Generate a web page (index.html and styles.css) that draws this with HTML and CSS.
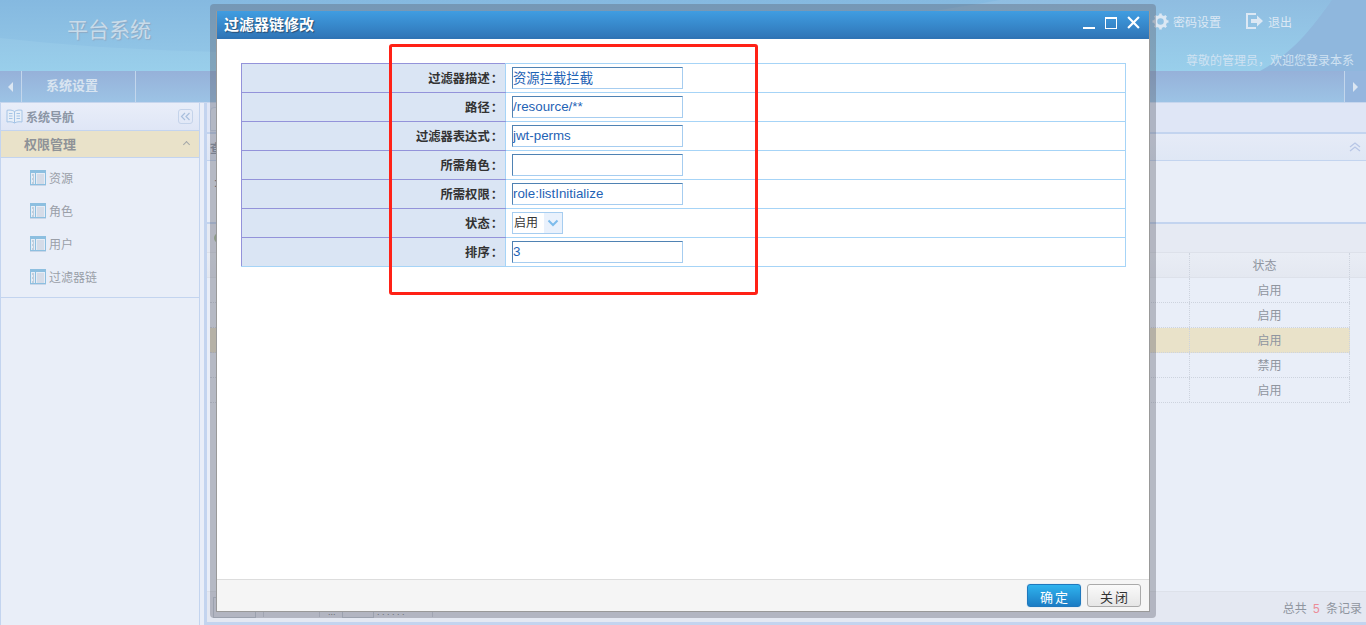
FILE: index.html
```html
<!DOCTYPE html>
<html lang="zh-CN">
<head>
<meta charset="utf-8">
<title>平台系统</title>
<link rel="stylesheet" href="styles.css">
</head>
<body>
<svg class="defs" width="0" height="0" aria-hidden="true">
  <symbol id="win" viewBox="0 0 16 16">
    <rect x="0.5" y="0.5" width="15" height="14" fill="#e6edf6" stroke="#8dbfe0"/>
    <rect x="1" y="1" width="14" height="2" fill="#8dbfe0"/>
    <rect x="5" y="1" width="1" height="14" fill="#8dbfe0"/>
    <rect x="7" y="4" width="7" height="10" fill="#d5dce8"/>
    <path d="M2 5h2M3 7h1M2 9h2M3 11h1M2 13h2" stroke="#9ab0c4" stroke-width="1"/>
    <rect x="0" y="15" width="16" height="1" fill="#c9d6e8"/>
  </symbol>
  <linearGradient id="skyfill" x1="0" y1="0" x2="0" y2="1">
    <stop offset="0" stop-color="#8fbde1"/>
    <stop offset="1" stop-color="#99cfeb"/>
  </linearGradient>
  <linearGradient id="wavefill" gradientUnits="userSpaceOnUse" x1="0" y1="0" x2="0" y2="62">
    <stop offset="0" stop-color="#85b9e0"/>
    <stop offset="1" stop-color="#93c7e7"/>
  </linearGradient>
</svg>
<div class="page">
  <header class="top">
    <svg class="top-bg" viewBox="0 0 1366 71" preserveAspectRatio="none" aria-hidden="true">
      <rect width="1366" height="71" fill="url(#skyfill)"/>
      <path d="M0 0H1000C760 44 300 72 0 38Z" fill="url(#wavefill)"/>
      <path d="M1332 0H1366V71H1260C1294 52 1312 28 1332 0Z" fill="#8fb7dd"/>
    </svg>
    <div class="brand">平台系统</div>
    <div class="top-right">
      <div class="tools">
        <span class="tool">
          <svg class="gear" viewBox="0 0 16 16" aria-hidden="true"><circle cx="8" cy="8" r="4.6" fill="none" stroke="#dce8f4" stroke-width="3"/><path d="M8 .5v3M8 12.500v3M.5 8h3M12.500 8h3M2.700 2.700l2 2M11.300 11.300l2 2M13.300 2.700l-2 2M4.700 11.300l-2 2" stroke="#dce8f4" stroke-width="2.400"/></svg>
          密码设置
        </span>
        <span class="tool">
          <svg class="exit" viewBox="0 0 18 16" aria-hidden="true"><path d="M10 1H1v14h9" fill="none" stroke="#dce8f4" stroke-width="2"/><path d="M5 6h6V2.500L17 8l-6 5.500V10H5Z" fill="#dce8f4"/></svg>
          退出
        </span>
      </div>
      <div class="welcome">尊敬的管理员，欢迎您登录本系</div>
    </div>
  </header>

  <nav class="menubar">
    <span class="arrow-cell"><i class="tri tri-left"></i></span>
    <span class="menu-item">系统设置</span>
    <span class="arrow-cell arrow-right"><i class="tri tri-right"></i></span>
  </nav>

  <div class="content">
    <aside class="side">
      <div class="side-head">
        <svg class="book" viewBox="0 0 17 15" aria-hidden="true"><path d="M8.500 2.500C6.500 1 3.500 .8 1 1.300V13C3.500 12.500 6.500 12.700 8.500 14C10.500 12.700 13.500 12.500 16 13V1.300C13.500 .8 10.500 1 8.500 2.500ZM8.500 2.500V14M3 4.500h3.500M3 7h3.500M3 9.500h3.500M10.500 4.500H14M10.500 7H14M10.500 9.500H14" fill="#e8eff8" stroke="#a5c4e6"/></svg>
        <span>系统导航</span>
        <span class="collapse"><svg viewBox="0 0 11 9" aria-hidden="true"><path d="M5 1L1.500 4.500 5 8M9.500 1L6 4.500 9.500 8" fill="none" stroke="#a9bfdd" stroke-width="1.200"/></svg></span>
      </div>
      <div class="acc-head"><span class="acc-title">权限管理</span><i class="caret"></i></div>
      <ul class="acc-list">
        <li><svg class="win" aria-hidden="true"><use href="#win"/></svg>资源</li>
        <li><svg class="win" aria-hidden="true"><use href="#win"/></svg>角色</li>
        <li><svg class="win" aria-hidden="true"><use href="#win"/></svg>用户</li>
        <li><svg class="win" aria-hidden="true"><use href="#win"/></svg>过滤器链</li>
      </ul>
    </aside>

    <main class="main">
      <div class="tabs"><span class="tab"></span></div>
      <div class="query-head">
        <span class="query-title">查询</span>
        <svg class="up2" viewBox="0 0 12 10" aria-hidden="true"><path d="M1 5l5-4 5 4M1 9l5-4 5 4" fill="none" stroke="#b8c6e6" stroke-width="1.300"/></svg>
      </div>
      <div class="query-body"><span class="colon">:</span></div>
      <div class="toolbar"><i class="green"></i></div>
      <div class="grid">
        <div class="grid-row grid-header"><span class="c1"></span><span class="c2">状态</span></div>
        <div class="grid-row"><span class="c1"></span><span class="c2">启用</span></div>
        <div class="grid-row"><span class="c1"></span><span class="c2">启用</span></div>
        <div class="grid-row selected"><span class="c1"></span><span class="c2">启用</span></div>
        <div class="grid-row"><span class="c1"></span><span class="c2">禁用</span></div>
        <div class="grid-row"><span class="c1"></span><span class="c2">启用</span></div>
      </div>
      <div class="pager">
        <span class="pbox"></span><span class="psep s1"></span><span class="psep s2"></span>
        <span class="pdots">...</span><span class="pbox small"></span><span class="pdots long">. . . . . .</span><span class="psep s3"></span>
        <span class="total">总共 <b>5</b> 条记录</span>
      </div>
    </main>
  </div>
</div>

<section class="dialog-frame">
  <div class="dialog">
    <div class="dialog-title">
      <span>过滤器链修改</span>
      <div class="win-btns">
        <i class="w-min"></i><i class="w-max"></i>
        <svg class="w-close" viewBox="0 0 12 12" aria-hidden="true"><path d="M1 1l10 10M11 1L1 11" stroke="#fff" stroke-width="2"/></svg>
      </div>
    </div>
    <div class="dialog-body">
      <table class="form">
        <tr><th>过滤器描述<span class="cl">：</span></th><td><input class="field" value="资源拦截拦截"></td></tr>
        <tr><th>路径<span class="cl">：</span></th><td><input class="field" value="/resource/**"></td></tr>
        <tr><th>过滤器表达式<span class="cl">：</span></th><td><input class="field" value="jwt-perms"></td></tr>
        <tr><th>所需角色<span class="cl">：</span></th><td><input class="field" value=""></td></tr>
        <tr><th>所需权限<span class="cl">：</span></th><td><input class="field" value="role:listInitialize"></td></tr>
        <tr><th>状态<span class="cl">：</span></th><td><div class="sel"><span class="sel-text">启用</span><span class="sel-arrow"><svg viewBox="0 0 12 8" aria-hidden="true"><path d="M1.500 1.500L6 6l4.500-4.500" fill="none" stroke="#7dbcec" stroke-width="2"/></svg></span></div></td></tr>
        <tr><th>排序<span class="cl">：</span></th><td><input class="field" value="3"></td></tr>
      </table>
    </div>
    <div class="dialog-foot">
      <button class="btn btn-ok">确定</button>
      <button class="btn btn-close">关闭</button>
    </div>
  </div>
</section>
<div class="annotation"></div>
</body>
</html>
```
FILE: styles.css
```css
* { box-sizing: border-box; }
html, body { margin: 0; padding: 0; height: 100%; overflow: hidden; }
body {
  font-family: "Liberation Sans", "Noto Sans CJK SC", sans-serif;
  font-size: 12px;
  background: #e9eef8;
  color: #8f959f;
}
.defs { position: absolute; }
.page { display: flex; flex-direction: column; width: 1366px; height: 625px; overflow: hidden; }

/* header */
.top { position: relative; height: 71px; display: flex; justify-content: space-between; flex: none; }
.top-bg { position: absolute; inset: 0; width: 100%; height: 100%; }
.brand {
  position: relative;
  margin: 13px 0 0 67px;
  font-size: 21px;
  line-height: 34px;
  color: #c9dbe9;
  text-shadow: 1px 1px 1px #8ea9c4;
}
.top-right { position: relative; width: 214px; display: flex; flex-direction: column; align-items: flex-end; }
.tools { display: flex; gap: 25px; margin: 11px 74px 0 0; height: 20px; align-items: center; color: #dce8f4; }
.tool { display: flex; align-items: center; gap: 4px; }
.gear { width: 17px; height: 17px; }
.exit { width: 18px; height: 16px; }
.welcome { margin: 20px 12px 0 0; height: 20px; line-height: 20px; white-space: nowrap; color: #cfe2f2; }

/* menu bar */
.menubar {
  height: 32px; flex: none; display: flex; align-items: stretch;
  background: linear-gradient(#96b1d9, #9cc3e5);
  border-bottom: 1px solid #c6d6ee;
}
.arrow-cell { width: 22px; display: flex; align-items: center; justify-content: center; border-right: 1px solid #c3d6ec; }
.arrow-right { margin-left: auto; border-right: 0; border-left: 1px solid #c3d6ec; background: #95b6de; }
.tri { width: 0; height: 0; border-style: solid; border-color: transparent; }
.tri-left { border-width: 5px 5px 5px 0; border-right-color: #dbe6f2; }
.tri-right { border-width: 5px 0 5px 5px; border-left-color: #dbe6f2; }
.menu-item { width: 114px; display: flex; align-items: center; padding: 0 0 5px 24px; font-weight: bold; font-size: 13px; color: #d8e4f0; border-right: 1px solid #c3d6ec; }

/* main row */
.content { flex: 1; display: flex; min-height: 0; }
.side { width: 200px; flex: none; background: #e9eef8; border: solid #c3d4ef; border-width: 0 1px 0 1px; }
.side-head { height: 27px; display: flex; align-items: center; padding: 0 6px 0 5px; gap: 3px; font-weight: bold; color: #8b95a5; background: linear-gradient(#e9eef9, #dfe6f6); }
.book { width: 17px; height: 15px; }
.collapse { margin-left: auto; width: 15px; height: 15px; display: flex; align-items: center; justify-content: center; border: 1px solid #c4d3ea; border-radius: 3px; }
.collapse svg { width: 11px; height: 9px; }
.acc-head { height: 28px; display: flex; align-items: center; padding: 0 10px 2px 23px; justify-content: space-between; background: #e9e2c9; border: solid #c3d4ef; border-width: 1px 0; font-size: 13px; font-weight: bold; color: #8e9297; }
.caret { width: 5px; height: 5px; border: solid #a3a7a8; border-width: 1px 0 0 1px; transform: rotate(45deg); margin-top: 3px; }
.acc-list { list-style: none; margin: 0; padding: 3px 0 4px; border-bottom: 1px solid #c3d4ef; }
.acc-list li { height: 33px; display: flex; align-items: center; padding-left: 29px; gap: 3px; color: #9a9fa8; font-size: 12px; }
.win { width: 16px; height: 16px; }

.main { flex: 1; min-width: 0; display: flex; flex-direction: column; margin-left: 4px; border-left: 3px solid #c3d4ef; border-bottom: 3px solid #c3d4ef; background: #e9eef8; }
.tabs { height: 31px; flex: none; background: #dfe6f6; padding: 4px 0 0 3px; border-bottom: 2px solid #c3d4ef; }
.tab { display: block; width: 30px; height: 24px; background: #e7ecf7; border: 1px solid #c9d5ea; border-radius: 4px 4px 0 0; }
.query-head { height: 27px; flex: none; display: flex; align-items: center; justify-content: space-between; padding: 0 5px 0 3px; background: linear-gradient(#e6ebf7, #dfe7f5); border-bottom: 1px solid #c3d4ef; font-weight: bold; color: #8b95a5; }
.up2 { width: 12px; height: 10px; }
.query-body { height: 63px; flex: none; padding: 16px 0 0 7px; color: #666; border-bottom: 2px solid #c3d4ef; }
.colon { display: block; line-height: 12px; }
.toolbar { height: 28px; flex: none; background: #e6eaf3; padding: 9px 0 0 7px; }
.green { display: block; width: 10px; height: 10px; border-radius: 50%; background: #a9bd96; }
.grid { flex: none; }
.grid-row { display: flex; height: 25px; width: 1140px; margin-left: 3px; line-height: 25px; border-bottom: 1px dotted #cdd3de; color: #8f959f; }
.c1 { width: 980px; border-right: 1px dotted #cdd3de; }
.c2 { width: 160px; text-align: center; padding-top: 1px; border-right: 1px dotted #cdd3de; }
.grid-header { width: auto; margin-left: 0; height: 26px; background: linear-gradient(#e9edf5, #e4e8f1); border-top: 1px solid #dde1ea; border-bottom: 1px solid #dde1ea; }
.grid-header .c1 { width: 983px; }
.grid-header .c2 { padding-right: 10px; }
.selected { background: #e9e2c9; }
.pager { margin-top: auto; height: 31px; flex: none; display: flex; align-items: center; padding: 0 4px 0 6px; background: #e4e8f2; border-top: 1px solid #dde1ea; color: #8f959f; }
.pbox { width: 43px; height: 21px; border: 1px solid #c0c8d5; flex: none; }
.pbox.small { width: 32px; }
.psep { width: 1px; height: 20px; background: #c9ced9; flex: none; }
.s1 { margin-left: 7px; }
.s2 { margin-left: 55px; }
.s3 { margin-left: 5px; }
.pdots { width: 14px; margin-left: 8px; padding-top: 9px; font-size: 9px; color: #777; flex: none; }
.pdots.long { width: 50px; margin-left: 3px; overflow: hidden; white-space: nowrap; }
.total { margin-left: auto; font-size: 12px; }
.total b { font-weight: normal; color: #ec8c98; margin: 0 3px; }

/* dialog */
.dialog-frame {
  position: absolute; left: 210px; top: 4px; width: 946px; height: 614px;
  padding: 7px 6px 6px; border-radius: 4px; background: rgba(88, 92, 104, 0.36);
}
.dialog { height: 100%; display: flex; flex-direction: column; background: #fff; border: solid #999; border-width: 0 1px 1px 1px; }
.dialog-title {
  height: 28px; flex: none; display: flex; align-items: center; justify-content: space-between; padding: 0 9px 2px 7px;
  background: linear-gradient(#409de1, #3077b9); border-bottom: 2px solid #2f74b5;
  color: #fff; font-size: 15px; font-weight: bold; text-shadow: 1px 1px 1px #2a4c70;
}
.win-btns { display: flex; align-items: center; gap: 10px; }
.w-min { display: block; width: 12px; height: 2px; background: #fff; margin-top: 9px; }
.w-max { display: block; width: 12px; height: 12px; border: 1px solid #fff; border-top-width: 2px; }
.w-close { width: 13px; height: 13px; margin-bottom: 1px; }
.dialog-body { flex: 1; padding: 24px 23px 0 24px; }
.form { width: 885px; border-collapse: collapse; table-layout: fixed; }
.form tr { height: 29px; }
.form th { width: 264px; padding: 0 2px 1px 0; text-align: right; font-size: 12.300px; color: #333; background: #dae5f4; border: 1px solid #9393da; border-right: 1px solid #a6d4f7; }
.cl { font-family: "Noto Sans CJK TC", sans-serif; margin-left: 1px; }
.form tr:last-child th { border-bottom-color: #a6d4f7; }
.form td { padding: 0 0 0 6px; border: 1px solid #a6d4f7; }
.field {
  display: block; width: 171px; height: 22px; padding: 0 0 2px; font-family: "Liberation Sans", "Noto Sans CJK SC", sans-serif; font-size: 13.330px; color: #1f63b5; background: #fff;
  border: 1px solid; border-color: #4f82b3 #a6cdf0 #a6cdf0 #4f82b3; outline: 0;
}
.sel { width: 51px; height: 22px; display: flex; border: 1px solid #a6cdf0; background: #fff; font-size: 12px; color: #333; }
.sel-text { flex: 1; padding-left: 1px; line-height: 20px; }
.sel-arrow { width: 18px; display: flex; align-items: center; justify-content: center; background: #e9f1fc; }
.sel-arrow svg { width: 12px; height: 8px; }
.dialog-foot { height: 32px; flex: none; display: flex; justify-content: flex-end; align-items: center; gap: 6px; padding: 0 8px 0 0; background: #f5f5f5; border-top: 1px solid #ddd; }
.btn { width: 54px; height: 23px; padding: 3px 0 0 2px; border-radius: 3px; font-family: inherit; font-size: 13px; line-height: 17px; letter-spacing: 2px; }
.btn-ok { color: #fff; background: linear-gradient(#2fb3ee, #1b7cc4); border: 1px solid #1f78bd; box-shadow: 0 0 1px #7db9e6; }
.btn-close { color: #333; background: linear-gradient(#fafafa, #e6e6e6); border: 1px solid #aaa; }

.annotation { position: absolute; left: 389px; top: 44px; width: 369px; height: 251px; border: 3px solid #ff2116; border-radius: 3px; }
```
